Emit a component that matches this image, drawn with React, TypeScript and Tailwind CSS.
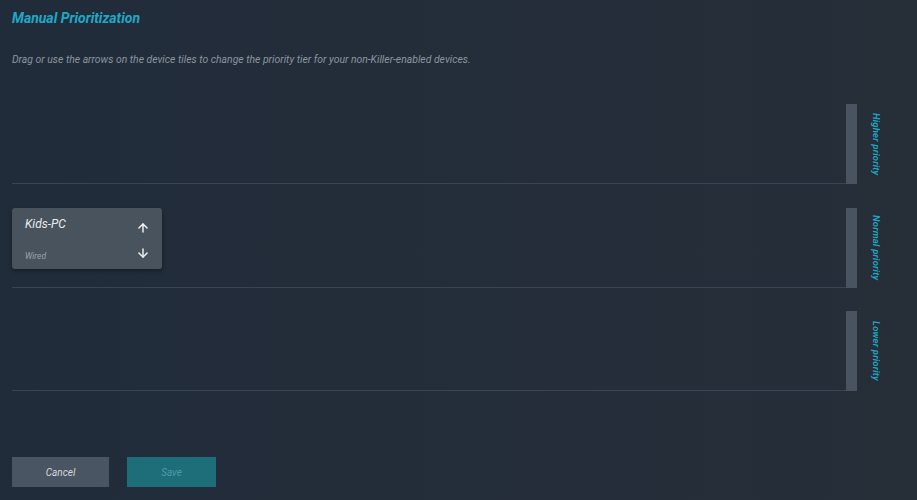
import React from "react";
import { ArrowUp, ArrowDown } from "lucide-react";

const font = { fontFamily: "Roboto, 'Liberation Sans', sans-serif" };

function Tier({
  label,
  children,
  className = "",
}: {
  label: string;
  children?: React.ReactNode;
  className?: string;
}) {
  return (
    <div className={`flex h-[80px] ${className}`}>
      <div className="flex-1 border-b border-[#3a4553] relative">{children}</div>
      <div className="w-[11px] bg-[#4a5460]" />
      <div className="w-[38px] flex items-center justify-center">
        <span className="[writing-mode:vertical-rl] text-[9.5px] font-semibold italic text-[#1fa8c6] tracking-[0.2px]">
          {label}
        </span>
      </div>
    </div>
  );
}

export default function App() {
  return (
    <div
      style={font}
      className="min-h-[500px] w-full bg-gradient-to-r from-[#212c3b] to-[#262e38] pl-[12px] pr-[22px] pt-[10px]"
    >
      <h1 className="text-[14px] leading-[17px] font-bold italic text-[#1fa8c6]">Manual Prioritization</h1>
      <p className="mt-[27px] text-[10.4px] leading-[12px] italic text-[#8b95a0]">
        Drag or use the arrows on the device tiles to change the priority tier for your non-Killer-enabled devices.
      </p>
      <div className="mt-[38px]">
        <Tier label="Higher priority" />
        <Tier label="Normal priority" className="mt-[24px]">
          <div className="w-[150px] h-[61px] rounded-[3px] bg-[#49535e] shadow-[0_2px_4px_rgba(0,0,0,0.35)] flex justify-between pl-[13px] pr-[12px]">
            <div className="flex flex-col justify-between pt-[9px] pb-[8px]">
              <div className="text-[12px] italic text-[#e8ebee] leading-[14px]">Kids-PC</div>
              <div className="text-[8.5px] italic text-[#9aa3ad] leading-[10px]">Wired</div>
            </div>
            <div className="flex flex-col justify-between pt-[13px] pb-[9px] text-[#eef0f2]">
              <ArrowUp size={14} strokeWidth={2.5} />
              <ArrowDown size={14} strokeWidth={2.5} />
            </div>
          </div>
        </Tier>
        <Tier label="Lower priority" className="mt-[23px]" />
      </div>
      <div className="mt-[66px] flex gap-[18px]">
        <button className="w-[97px] h-[30px] bg-[#4a5563] text-[10px] italic text-[#d5dade]">Cancel</button>
        <button className="w-[89px] h-[30px] bg-[#1e6e7a] text-[10px] italic text-[#4b9da8]">Save</button>
      </div>
    </div>
  );
}
